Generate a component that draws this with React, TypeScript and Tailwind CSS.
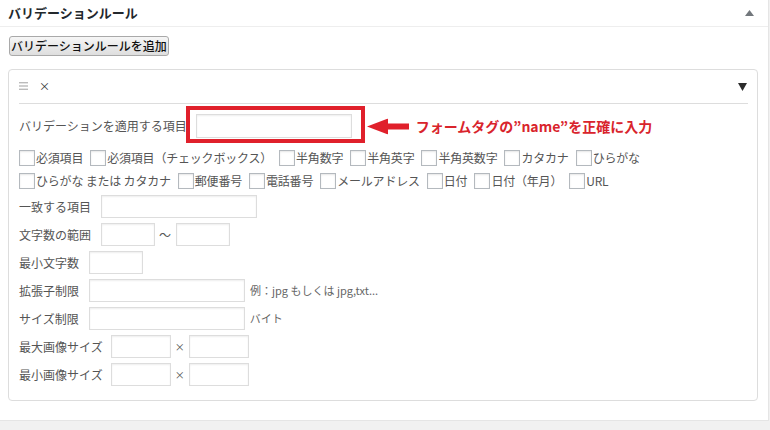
import type { ReactNode } from 'react';

const font = { fontFamily: '"Noto Sans CJK JP", "Noto Sans", sans-serif' };

function TextInput({ w }: { w: string }) {
  return (
    <span
      className={`block h-[23px] ${w} border border-[#ddd] bg-white shadow-[inset_0_1px_2px_rgba(0,0,0,0.07)]`}
    />
  );
}

function Check({ label }: { label: string }) {
  return (
    <span className="mr-[7px] flex items-center">
      <span className="h-[16px] w-[16px] shrink-0 border border-[#b4b9be] bg-white shadow-[inset_0_1px_2px_rgba(0,0,0,0.1)]" />
      <span className="ml-[1px] whitespace-pre tracking-[-0.2px]">{label}</span>
    </span>
  );
}

function Row({ label, children }: { label: string; children: ReactNode }) {
  return (
    <div className="flex h-[23px] items-center">
      <span className="mr-[10px] whitespace-nowrap">{label}</span>
      {children}
    </div>
  );
}

const row1 = ['必須項目', '必須項目（チェックボックス）', '半角数字', '半角英字', '半角英数字', 'カタカナ', 'ひらがな'];
const row2 = ['ひらがな または カタカナ', '郵便番号', '電話番号', 'メールアドレス', '日付', '日付（年月）', 'URL'];

export default function App() {
  return (
    <div className="h-[430px] w-[770px] overflow-hidden bg-[#f1f1f1]" style={font}>
      <div className="h-[421px] w-[769px] border-r border-b border-[#e5e5e5] bg-white">
        {/* Metabox header */}
        <div className="flex h-[27px] items-center justify-between border-b border-[#eee] pl-[8px] pr-[14px]">
          <h2 className="text-[13px] font-bold text-[#23282d]">バリデーションルール</h2>
          <svg width="9" height="6" viewBox="0 0 9 6" className="mb-[1px]">
            <polygon points="0,6 4.5,0 9,6" fill="#72777c" />
          </svg>
        </div>

        <div className="px-[8px] pt-[9px]">
          <button className="ml-[1px] flex h-[20px] w-[160px] items-center justify-center rounded-[3px] border border-[#a9a9a9] bg-gradient-to-b from-[#f6f6f6] to-[#dedede] text-[12px] font-medium text-[#111]">
            バリデーションルールを追加
          </button>

          {/* Rule box */}
          <div className="mt-[13px] h-[332px] w-[750px] rounded-[4px] border border-[#ddd] bg-white px-[10px] pr-[9px] text-[12px] text-[#555]">
            <div className="flex h-[34px] items-center border-b border-[#ddd]">
              <svg width="9" height="8" viewBox="0 0 9 8" className="mt-[-2px]">
                <rect x="0" y="0" width="9" height="1.4" fill="#bbb" />
                <rect x="0" y="3.3" width="9" height="1.4" fill="#bbb" />
                <rect x="0" y="6.6" width="9" height="1.4" fill="#bbb" />
              </svg>
              <span className="ml-[11px] text-[11px] leading-none text-[#333]">×</span>
              <svg width="9" height="8" viewBox="0 0 9 8" className="ml-auto mr-[1px]">
                <polygon points="0,0 9,0 4.5,8" fill="#2c2c2c" />
              </svg>
            </div>

            <div className="mt-[10px] flex h-[24px] items-center">
              <span className="mr-[9px] whitespace-nowrap">バリデーションを適用する項目</span>
              <span className="relative block">
                <span className="block h-[24px] w-[156px] border border-[#ddd] bg-white shadow-[inset_0_1px_2px_rgba(0,0,0,0.07)]" />
                <span className="absolute -top-[8px] -bottom-[5px] -left-[10px] -right-[13px] border-[4px] border-[#e0202b]" />
                <span className="absolute left-[171px] top-1/2 flex -translate-y-1/2 items-center whitespace-nowrap">
                  <svg width="42" height="16" viewBox="0 0 42 16">
                    <polygon points="0,8 21,0 21,5 42,5 42,11 21,11 21,16" fill="#e0202b" />
                  </svg>
                  <span className="ml-[7px] text-[14px] font-bold text-[#d9242c]">
                    フォームタグの”name”を正確に入力
                  </span>
                </span>
              </span>
            </div>

            <div className="mt-[8px] flex h-[23px] items-center">
              {row1.map((l) => (
                <Check key={l} label={l} />
              ))}
            </div>
            <div className="flex h-[23px] items-center">
              {row2.map((l) => (
                <Check key={l} label={l} />
              ))}
            </div>

            <div className="mt-[3px] flex flex-col gap-[5px]">
              <Row label="一致する項目">
                <TextInput w="w-[156px]" />
              </Row>
              <Row label="文字数の範囲">
                <TextInput w="w-[54px]" />
                <span className="ml-[4px] mr-[5px]">～</span>
                <TextInput w="w-[54px]" />
              </Row>
              <Row label="最小文字数">
                <TextInput w="w-[54px]" />
              </Row>
              <Row label="拡張子制限">
                <TextInput w="w-[156px]" />
                <span className="ml-[5px] text-[11px] text-[#666]">例：jpg もしくは jpg,txt...</span>
              </Row>
              <Row label="サイズ制限">
                <TextInput w="w-[156px]" />
                <span className="ml-[5px] text-[11px] text-[#666]">バイト</span>
              </Row>
              <Row label="最大画像サイズ">
                <span className="-ml-[2px] flex items-center">
                  <TextInput w="w-[60px]" />
                  <span className="px-[4px] text-[10px] text-[#555]">×</span>
                  <TextInput w="w-[60px]" />
                </span>
              </Row>
              <Row label="最小画像サイズ">
                <span className="-ml-[2px] flex items-center">
                  <TextInput w="w-[60px]" />
                  <span className="px-[4px] text-[10px] text-[#555]">×</span>
                  <TextInput w="w-[60px]" />
                </span>
              </Row>
            </div>
          </div>
        </div>
      </div>
    </div>
  );
}
